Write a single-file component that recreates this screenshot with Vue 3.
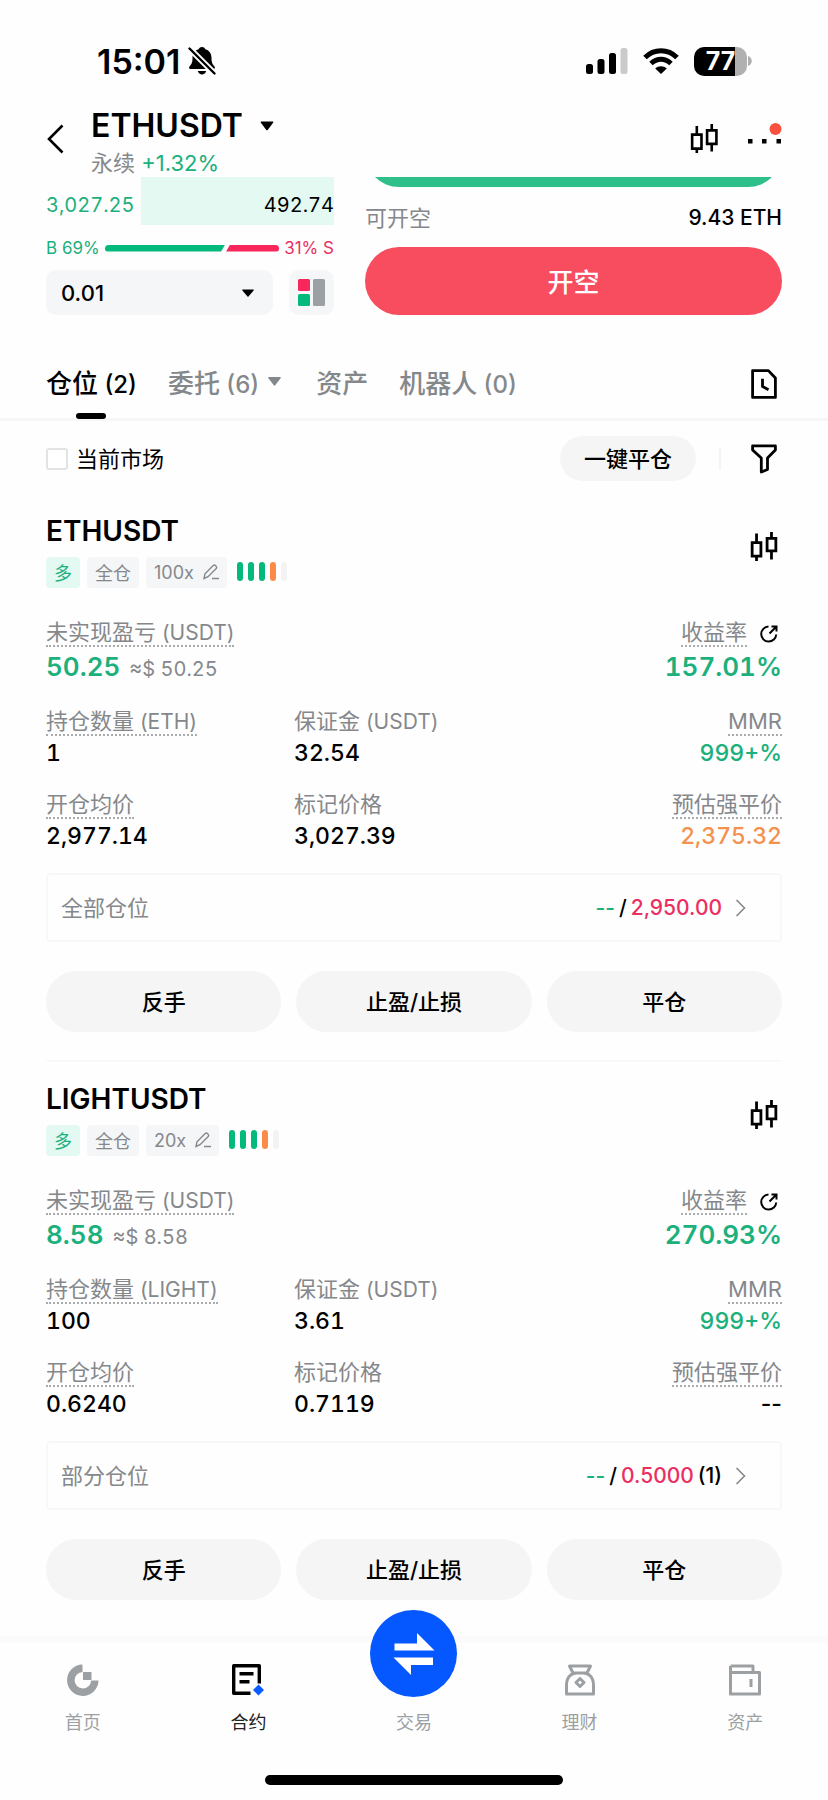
<script setup>
import { ref } from 'vue'

const onlyCurrent = ref(false)
const step = ref('0.01')

const positions = [
  {
    symbol: 'ETHUSDT', leverage: '100x', pnl: '50.25', roi: '157.01%',
    unit: 'ETH', size: '1', margin: '32.54', mmr: '999+%',
    entry: '2,977.14', mark: '3,027.39', liq: '2,375.32', liqTone: 'orange',
    scope: '全部仓位', stop: '2,950.00', count: ''
  },
  {
    symbol: 'LIGHTUSDT', leverage: '20x', pnl: '8.58', roi: '270.93%',
    unit: 'LIGHT', size: '100', margin: '3.61', mmr: '999+%',
    entry: '0.6240', mark: '0.7119', liq: '--', liqTone: 'empty',
    scope: '部分仓位', stop: '0.5000', count: '(1)'
  }
]
const actions = ['反手', '止盈/止损', '平仓']
</script>

<template>
  <div class="page">
    <div class="status">
      <div class="clock">
        <span>15:01</span>
        <svg width="28" height="30" viewBox="0 0 28 30">
          <path d="M14 1c-2 0-3 1-3.300 2.300C6.500 4.600 4.500 8 4.500 12c0 5-1.300 6.500-3 8.500C.8 21.500 1 23 2.500 23h23c1.500 0 1.700-1.500 1-2.500-1.700-2-3-3.500-3-8.500 0-4-2-7.400-6.200-8.700C17 2 16 1 14 1zM9.800 25h8.400c-.6 2.300-2.200 3.500-4.200 3.500S10.400 27.300 9.800 25z" />
          <path d="M1 2l26 26" stroke="#fff" stroke-width="6" />
          <path d="M1.500 2.500l25 25" stroke="#000" stroke-width="2.400" stroke-linecap="round" />
        </svg>
      </div>
      <div class="signals">
        <svg width="42" height="28" viewBox="0 0 42 28">
          <rect x="0" y="17" width="7" height="10" rx="2.500" />
          <rect x="11.500" y="12" width="7" height="15" rx="2.500" />
          <rect x="23" y="6" width="7" height="21" rx="2.500" />
          <rect x="34.500" y="1" width="7" height="26" rx="2.500" fill="#cacaca" />
        </svg>
        <svg width="38" height="28" viewBox="0 0 38 28" fill="none" stroke="#000" stroke-width="5">
          <path d="M3 10.500c9-9 23-9 32 0" />
          <path d="M9 16.500c6-5.600 14-5.600 20 0" />
          <path d="M19 27l-5.800-5.600c3.400-2.900 8.200-2.900 11.600 0z" fill="#000" stroke="none" />
        </svg>
        <div class="battery">
          <div class="cell">77</div>
          <svg width="4" height="10" viewBox="0 0 4 10"><path d="M0 0c5 1.500 5 8.500 0 10z" fill="#b0b0b0" /></svg>
        </div>
      </div>
    </div>

    <header class="header">
      <button class="plain" aria-label="返回">
        <svg width="18" height="30" viewBox="0 0 18 30" fill="none" stroke="#000" stroke-width="2.600"><path d="M16.500 1.500L3 15l13.500 13.500" /></svg>
      </button>
      <div class="pair">
        <button class="plain pair-name">
          ETHUSDT
          <svg width="14" height="10" viewBox="0 0 14 10"><path d="M1.500.5h11c.8 0 1 .6.6 1.200L7.700 8.900c-.4.500-1 .5-1.400 0L.9 1.700C.4 1.100.700.500 1.500.500z" /></svg>
        </button>
        <div class="pair-sub"><span class="muted">永续</span> <span class="green">+1.32%</span></div>
      </div>
      <button class="plain candle" aria-label="图表">
        <svg width="28" height="30" viewBox="0 0 30 32" fill="none" stroke="#000" stroke-width="2.800"><path d="M2.300 11.300h10v15h-10zM7.300 2v9.300M7.300 26.300V31M18.300 6.800h10v14.400h-10zM23.300 0v6.800M23.300 21.200v8.300" /></svg>
      </button>
      <button class="plain" aria-label="更多">
        <svg width="36" height="32" viewBox="0 0 36 32"><path d="M2 16h4.500v4.500H2zM16 16h4.500v4.500H16zM30.500 16H35v4.500h-4.500z" /><circle cx="29.500" cy="6" r="6" fill="#f9503f" /></svg>
      </button>
    </header>

    <section class="order">
      <div class="book">
        <div class="depth">
          <span class="green">3,027.25</span>
          <span class="amount">492.74</span>
        </div>
        <div class="ratio">
          <span class="green">B 69%</span>
          <div class="bars"><i class="buy"></i><i class="sell"></i></div>
          <span class="red">31% S</span>
        </div>
        <div class="precision">
          <div class="select">
            <select v-model="step" aria-label="价格精度"><option>0.01</option></select>
            <svg width="12" height="8" viewBox="0 0 12 8"><path d="M.8.500h10.400c.6 0 .7.500.4.900L6.500 7.500c-.3.400-.7.400-1 0L.4 1.400C.1 1 .2.500.8.500z" /></svg>
          </div>
          <button class="layout" aria-label="盘口样式">
            <svg width="27" height="27" viewBox="0 0 27 27">
              <rect x="0" y="0" width="12" height="12" rx="1.500" fill="#f7275b" />
              <rect x="0" y="15" width="12" height="12" rx="1.500" fill="#04b97c" />
              <rect x="15" y="0" width="12" height="27" rx="1.500" fill="#9ba0a3" />
            </svg>
          </button>
        </div>
      </div>
      <div class="side">
        <div class="clip"><button class="pill long" aria-label="开多"></button></div>
        <div class="avail"><span class="muted">可开空</span><span class="avail-value">9.43 ETH</span></div>
        <button class="pill short">开空</button>
      </div>
    </section>

    <nav class="tabs">
      <button class="tab active"><span>仓位<small> (2)</small></span></button>
      <button class="tab"><span>委托<small> (6)</small></span>
        <svg width="13" height="9" viewBox="0 0 13 9"><path d="M1 0h11c.8 0 1 .7.6 1.200L7.200 8.300c-.4.500-1 .5-1.400 0L.4 1.200C0 .7.200 0 1 0z" fill="#85888b" /></svg>
      </button>
      <button class="tab">资产</button>
      <button class="tab"><span>机器人<small> (0)</small></span></button>
      <button class="plain push" aria-label="历史记录">
        <svg width="26" height="30" viewBox="0 0 26 30" fill="none" stroke="#000" stroke-width="2.800" stroke-linejoin="round"><path d="M1.600 1.600h15.800l7 7.400v19.400H1.600z" /><path d="M11.500 9.800v7.700l6 3.300" stroke-linejoin="miter" /></svg>
      </button>
    </nav>

    <div class="filters">
      <label class="check"><input v-model="onlyCurrent" type="checkbox" /><span>当前市场</span></label>
      <button class="soft close-all">一键平仓</button>
      <i class="divider"></i>
      <button class="plain" aria-label="筛选">
        <svg width="26" height="30" viewBox="0 0 26 30" fill="none" stroke="#000" stroke-width="2.800" stroke-linejoin="round"><path d="M1.600 1.800h22.800v4.200L16.500 14v11.500L10.300 28V14L1.600 6z" /></svg>
      </button>
    </div>

    <main class="list">
      <article v-for="p in positions" :key="p.symbol" class="card">
        <div class="card-head">
          <div>
            <h2>{{ p.symbol }}</h2>
            <div class="tags">
              <span class="tag long-tag">多</span>
              <span class="tag">全仓</span>
              <button class="tag">{{ p.leverage }}
                <svg width="16" height="16" viewBox="0 0 16 16" fill="none" stroke="#85888b" stroke-width="1.400"><path d="M1 14.500l1-4.700L10 1.700c.8-.8 1.700-.8 2.400-.1l.7.700c.7.700.7 1.600-.1 2.400L5 12.700zM9 14.500h7" /></svg>
              </button>
              <span class="meter"><i></i><i></i><i></i><i class="warn"></i><i class="off"></i></span>
            </div>
          </div>
          <button class="plain" aria-label="图表">
            <svg width="28" height="30" viewBox="0 0 30 32" fill="none" stroke="#000" stroke-width="3"><path d="M2.300 11.300h9.400v14.400H2.300zM7 1.500v9.800M7 25.700V31M18.300 6.800h9.400v13.400h-9.400zM23 0v6.800M23 20.200v9.300" /></svg>
          </button>
        </div>

        <div class="summary">
          <div>
            <div class="label"><span class="hint">未实现盈亏<small> (USDT)</small></span></div>
            <div class="big"><b class="green">{{ p.pnl }}</b><span class="approx">≈$ {{ p.pnl }}</span></div>
          </div>
          <div class="end">
            <div class="label roi">
              <span class="hint">收益率</span>
              <button class="plain" aria-label="分享">
                <svg width="19" height="18" viewBox="0 0 19 18" fill="none" stroke="#000" stroke-width="2"><path d="M8.500 1.600A7.500 7.500 0 1 0 16.200 9.500M9.500 8.500L16 2M11.500 1.500h5V6.500" /></svg>
              </button>
            </div>
            <div class="big"><b class="green">{{ p.roi }}</b></div>
          </div>
        </div>

        <div class="grid">
          <div>
            <div class="label"><span class="hint">持仓数量<small> ({{ p.unit }})</small></span></div>
            <div class="value">{{ p.size }}</div>
          </div>
          <div>
            <div class="label"><span>保证金<small> (USDT)</small></span></div>
            <div class="value">{{ p.margin }}</div>
          </div>
          <div class="end">
            <div class="label"><span class="hint">MMR</span></div>
            <div class="value green">{{ p.mmr }}</div>
          </div>
          <div>
            <div class="label"><span class="hint">开仓均价</span></div>
            <div class="value">{{ p.entry }}</div>
          </div>
          <div>
            <div class="label"><span>标记价格</span></div>
            <div class="value">{{ p.mark }}</div>
          </div>
          <div class="end">
            <div class="label"><span class="hint">预估强平价</span></div>
            <div class="value" :class="p.liqTone">{{ p.liq }}</div>
          </div>
        </div>

        <button class="stops">
          <span class="muted">{{ p.scope }}</span>
          <span class="stops-value"><span class="green">--</span><span>/</span><span class="red">{{ p.stop }}</span><span v-if="p.count">{{ p.count }}</span></span>
          <svg width="11" height="18" viewBox="0 0 11 18" fill="none" stroke="#85888b" stroke-width="1.600"><path d="M1.500 1l8 8-8 8" /></svg>
        </button>

        <div class="actions">
          <button v-for="a in actions" :key="a" class="soft">{{ a }}</button>
        </div>
      </article>
    </main>

    <footer class="dock">
      <nav class="dock-nav">
        <a href="#home">
          <svg width="32" height="32" viewBox="0 0 32 32"><path d="M15.500 4.200A12 12 0 1 0 27.800 16.500" fill="none" stroke="#9ca0a2" stroke-width="7.500" /><path d="M16 8h8.500v8H16z" fill="#9ca0a2" /></svg>
          <span>首页</span>
        </a>
        <a href="#futures" class="on">
          <svg width="32" height="32" viewBox="0 0 32 32" fill="none" stroke="#000" stroke-width="3.400"><path d="M18.500 29.300H1.700V1.700h25.600v17.800" stroke-linejoin="round" /><path d="M7.500 9.800h14M7.500 17.800h10" /><path d="M26.500 20.500l5.500 5.500-5.500 5.500L21 26z" fill="#0a5cff" stroke="none" /></svg>
          <span>合约</span>
        </a>
        <a href="#trade" class="trade">
          <span class="orb">
            <svg width="42" height="44" viewBox="0 0 42 44" fill="#fff"><path d="M1.500 11.500H24V1l17.500 17.500h-40zM40 33H18v10L.500 25.500H40z" /></svg>
          </span>
          <span>交易</span>
        </a>
        <a href="#earn">
          <svg width="32" height="32" viewBox="0 0 32 32" fill="none" stroke="#9ca0a2" stroke-width="3" stroke-linejoin="round"><path d="M5.500 2h21l-3.500 7H9zM2.500 30v-9c0-8 5-12 10-12h7c5 0 10 4 10 12v9z" /><path d="M16 14.500l4 4-4 4-4-4z" /></svg>
          <span>理财</span>
        </a>
        <a href="#assets">
          <svg width="32" height="32" viewBox="0 0 32 32" fill="none" stroke="#9ca0a2" stroke-width="3" stroke-linejoin="round"><path d="M1.500 2H24v6.500M1.500 2v28h29V8.500h-29M22 15v8" /></svg>
          <span>资产</span>
        </a>
      </nav>
      <div class="home-bar"></div>
    </footer>
  </div>
</template>

<style>
body { margin: 0; background: #fff; }
</style>

<style scoped>
.page {
  min-height: 100vh;
  display: flex;
  flex-direction: column;
  background: #fefefe;
  color: #000;
  font-family: Inter, "Noto Sans CJK SC", sans-serif;
  font-size: 22px;
}
.page * { box-sizing: border-box; }
svg { display: block; flex: none; }
small { font-size: 21px; }
button, select, input { font: inherit; color: inherit; margin: 0; }
button { border: 0; padding: 0; background: none; white-space: nowrap; cursor: pointer; }
.muted { color: #85888b; }
.green { color: #1bb07c; }
.red { color: #ea2f62; }
.orange { color: #f5914e; }

.status {
  display: flex;
  justify-content: space-between;
  align-items: center;
  height: 100px;
  padding: 22px 76px 0 97px;
}
.clock { display: flex; align-items: center; gap: 8px; font-size: 34px; font-weight: 600; }
.signals { display: flex; align-items: center; gap: 14px; }
.battery { display: flex; align-items: center; gap: 1px; }
.cell {
  width: 53px;
  height: 29px;
  border-radius: 10px;
  background: linear-gradient(90deg, #000 77%, #b0b0b0 77%);
  color: #fff;
  font-size: 25px;
  font-weight: 700;
  line-height: 29px;
  text-align: center;
}

.header { display: flex; align-items: center; padding: 0 46px; height: 77px; }
.pair { flex: 1; padding: 4px 0 0 27px; }
.pair-name { display: flex; align-items: center; gap: 17px; font-size: 32px; font-weight: 600; line-height: 44px; }
.pair-sub { line-height: 30px; }
.candle { margin-right: 28px; }

.order { display: grid; grid-template-columns: 288fr 417fr; gap: 31px; padding: 0 46px; }
.depth { display: flex; justify-content: space-between; font-size: 20px; line-height: 56px; height: 48px; font-variant-numeric: tabular-nums; }
.amount { width: 67%; height: 48px; background: #e3f9f1; text-align: right; }
.ratio { display: flex; align-items: center; gap: 5px; margin-top: 11px; font-size: 17px; line-height: 24px; }
.bars { flex: 1; display: flex; gap: 0; height: 7px; }
.bars i { display: block; height: 7px; }
.buy { flex: 69; background: #04b97c; border-radius: 4px 0 0 4px; clip-path: polygon(0 0, 100% 0, calc(100% - 4px) 100%, 0 100%); }
.sell { flex: 31; background: #f7275b; border-radius: 0 4px 4px 0; clip-path: polygon(5px 0, 100% 0, 100% 100%, 1px 100%); }
.precision { display: flex; gap: 16px; margin-top: 10px; }
.select { flex: 1; display: flex; align-items: center; position: relative; height: 45px; border-radius: 10px; background: #f5f6f8; }
.select select { width: 100%; height: 45px; padding: 0 15px; border: 0; background: none; appearance: none; font-weight: 500; }
.select svg { position: absolute; right: 19px; }
.layout { width: 45px; height: 45px; display: grid; place-items: center; border-radius: 10px; background: #f5f6f8; }
.clip { height: 10px; overflow: hidden; display: flex; align-items: flex-end; }
.pill { width: 100%; height: 68px; border-radius: 34px; flex: none; }
.long { background: #2ebf8a; }
.short { padding-bottom: 2px; background: #f84c5f; color: #fff; font-size: 26px; font-weight: 500; }
.avail { display: flex; justify-content: space-between; line-height: 30px; height: 30px; margin: 16px 0 14px; }
.avail-value { font-size: 21px; font-weight: 500; }

.tabs {
  display: flex;
  align-items: center;
  gap: 31px;
  margin-top: 35px;
  padding: 0 51px 0 46px;
  height: 71px;
  border-bottom: 3px solid #f6f6f6;
}
.tab { position: relative; display: flex; align-items: center; gap: 9px; height: 68px; padding-bottom: 5px; font-size: 26px; font-weight: 500; color: #85888b; }
.tab small { font-size: 24px; }
.tab svg { margin-right: 4px; }
.tab.active { color: #000; }
.tab.active::after {
  content: "";
  position: absolute;
  left: 50%;
  bottom: -1px;
  width: 30px;
  height: 6px;
  margin-left: -15px;
  border-radius: 3px;
  background: #000;
}
.push { margin-left: auto; }

.filters { display: flex; align-items: center; height: 45px; margin-top: 15px; padding: 0 51px 0 46px; }
.check { display: flex; align-items: center; gap: 8px; }
.check span { padding-bottom: 4px; }
.check input { appearance: none; width: 22px; height: 22px; border: 2px solid #e2e3e4; border-radius: 3px; background: #fff; }
.check input:checked { background: #000; }
.soft { padding-bottom: 4px; background: #f5f5f5; font-weight: 500; border-radius: 31px; }
.close-all { height: 45px; padding: 0 24px 4px; margin-left: auto; }
.divider { width: 2px; height: 22px; margin: 0 30px 0 23px; background: #f3f3f3; }

.list { padding: 13px 46px 36px; }
.card { padding: 19px 0 28px; border-bottom: 2px solid #f9f9f9; }
.card:last-child { border: 0; padding-bottom: 0; }
.card-head { display: flex; justify-content: space-between; align-items: center; height: 75px; padding-right: 4px; }
.card-head > .plain { padding-bottom: 8px; }
h2 { margin: 0 0 8px; font-size: 28px; font-weight: 600; line-height: 36px; }
.tags { display: flex; gap: 7px; }
.tag {
  display: flex;
  align-items: center;
  gap: 9px;
  height: 31px;
  padding: 0 8px 1px;
  border-radius: 4px;
  background: #f5f6f7;
  color: #85888b;
  font-size: 18px;
}
.long-tag { background: #e3f9f1; color: #1bb07c; }
.meter { display: flex; gap: 5px; padding-top: 5px; margin-left: 3px; }
.meter i { width: 6px; height: 19px; border-radius: 3px; background: #04b97c; }
.meter .warn { background: #fb8b46; }
.meter .off { background: #f3f3f3; }

.summary { display: flex; justify-content: space-between; margin: 33px 0 28px; }
.end { display: flex; flex-direction: column; align-items: flex-end; }
.label { display: flex; height: 26px; line-height: 22px; color: #85888b; }
.label > span { height: 26px; }
.hint { border-bottom: 2px dotted #a9abad; }
.roi { gap: 13px; align-items: center; padding-right: 3px; }
.big { display: flex; align-items: baseline; gap: 9px; height: 32px; margin-top: 3px; font-size: 26px; line-height: 34px; font-variant-numeric: tabular-nums; }
.big b { font-weight: 600; }
.approx { color: #85888b; font-size: 20px; }
.value { height: 28px; margin-top: 3px; font-size: 23px; font-weight: 500; line-height: 28px; font-variant-numeric: tabular-nums; }
.value.empty { font-variant-numeric: normal; }
.grid { display: grid; grid-template-columns: 248fr 244fr 244fr; row-gap: 26px; }

.stops { display: flex; align-items: center; width: 100%; height: 69px; margin: 23px 0 29px; padding: 0 34px 0 13px; border: 2px solid #f8f8f8; border-radius: 4px; }
.stops .muted { padding-bottom: 3px; }
.stops-value { display: flex; gap: 4px; margin: 0 13px 0 auto; font-size: 21px; font-weight: 500; }
.actions { display: grid; grid-template-columns: repeat(3, 1fr); gap: 15px; }
.actions .soft { height: 61px; }

.dock { margin-top: auto; border-top: 7px solid #fbfbfb; background: #fefefe; padding-bottom: 15px; }
.dock-nav { display: grid; grid-template-columns: repeat(5, 1fr); padding-top: 21px; }
.dock-nav a { position: relative; display: flex; flex-direction: column; align-items: center; gap: 14px; color: #9ca0a2; font-size: 18px; line-height: 26px; text-decoration: none; }
.dock-nav .on { color: #222; }
.dock-nav .trade { justify-content: flex-end; }
.orb { position: absolute; top: -54px; display: grid; place-items: center; width: 87px; height: 87px; border-radius: 50%; background: #0557ff; }
.home-bar { width: 36%; height: 10px; margin: 39px auto 0; border-radius: 5px; background: #000; }
</style>
